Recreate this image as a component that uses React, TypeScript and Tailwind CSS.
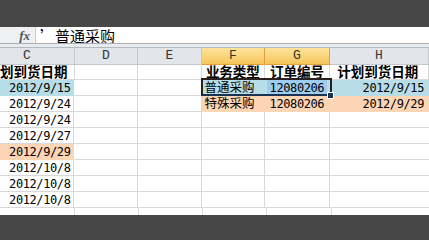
import React from "react";

const cjk = { fontFamily: '"Noto Sans CJK SC", "Noto Sans", sans-serif' };
const mono = { fontFamily: '"DejaVu Sans Mono", "Liberation Mono", monospace' };

type Row = {
  c: string;
  cBg?: string;
  f?: string;
  g?: string;
  h?: string;
  fill?: string;
};

const rows: Row[] = [
  { c: "2012/9/15", cBg: "bg-[#b7dee8] border-[#b7dee8]", f: "普通采购", g: "12080206", h: "2012/9/15", fill: "bg-[#b7dee8] border-[#b7dee8]" },
  { c: "2012/9/24", f: "特殊采购", g: "12080206", h: "2012/9/29", fill: "bg-[#fcd5b4] border-[#fcd5b4]" },
  { c: "2012/9/24" },
  { c: "2012/9/27" },
  { c: "2012/9/29", cBg: "bg-[#fcd5b4] border-[#fcd5b4]" },
  { c: "2012/10/8" },
  { c: "2012/10/8" },
  { c: "2012/10/8" },
];

const grid = "border-r border-b border-[#d9d9d9]";

const HeadCell = ({ label, w, sel, pl }: { label: string; w: string; sel?: boolean; pl?: string }) => (
  <div
    className={`${w} h-full flex items-center ${pl ? pl : "justify-center"} text-[13px] ${
      sel
        ? "bg-gradient-to-b from-[#fde49a] to-[#f6c55a] border-r border-b border-[#e2a13b]"
        : "bg-[#e2e5e9] border-r border-b border-[#c3c8ce]"
    } text-[#333]`}
    style={{ fontFamily: '"Liberation Mono", monospace' }}
  >
    {label}
  </div>
);

export default function App() {
  return (
    <div className="w-[429px] h-[240px] overflow-hidden bg-white flex flex-col relative">
      <div className="h-[27px] shrink-0 bg-[#474747]" />

      {/* formula bar */}
      <div className="h-[16px] shrink-0 flex">
        <div className="w-[36px] h-full bg-[#eef0f2] border-r border-[#c9cdd2] flex items-center justify-end pr-[5px]">
          <span className="text-[13px] italic font-bold text-[#555] leading-none" style={{ fontFamily: '"Liberation Serif", serif' }}>
            fx
          </span>
        </div>
        <div className="flex-1 flex items-center pl-[4px] text-[15px] leading-none text-black" style={cjk}>
          ’普通采购
        </div>
      </div>
      <div className="h-[1px] shrink-0 bg-[#a9afb7]" />
      <div className="h-[3px] shrink-0 bg-[#e9ecef]" />
      <div className="h-[1px] shrink-0 bg-[#b4b9c0]" />

      {/* column headers */}
      <div className="h-[17px] shrink-0 flex">
        <HeadCell label="C" w="w-[75px]" pl="pl-[23px]" />
        <HeadCell label="D" w="w-[64px]" />
        <HeadCell label="E" w="w-[64px]" />
        <HeadCell label="F" w="w-[64px]" sel />
        <HeadCell label="G" w="w-[65px]" sel />
        <HeadCell label="H" w="w-[100px]" />
      </div>

      {/* title row */}
      <div className="h-[15px] shrink-0 flex text-[13.5px] font-bold leading-none text-black" style={cjk}>
        <div className={`w-[75px] h-full flex items-center justify-end pr-[6px] overflow-hidden whitespace-nowrap ${grid}`}>
          计划到货日期
        </div>
        <div className={`w-[64px] h-full ${grid}`} />
        <div className={`w-[64px] h-full ${grid}`} />
        <div className={`w-[64px] h-full flex items-center justify-center whitespace-nowrap ${grid}`}>业务类型</div>
        <div className={`w-[65px] h-full flex items-center justify-center whitespace-nowrap ${grid}`}>订单编号</div>
        <div className={`w-[100px] h-full flex items-center justify-center whitespace-nowrap pr-[2px] ${grid}`}>计划到货日期</div>
      </div>

      {/* data rows */}
      {rows.map((r, i) => (
        <div key={i} className="h-[16px] shrink-0 flex text-[12px] leading-none text-black">
          <div
            className={`w-[75px] h-full flex items-center justify-end pr-[3px] pt-[1px] tracking-[-0.4px] border-r border-b ${r.cBg ?? "border-[#d9d9d9]"}`}
            style={mono}
          >
            {r.c}
          </div>
          <div className={`w-[64px] h-full ${grid}`} />
          <div className={`w-[64px] h-full ${grid}`} />
          <div
            className={`w-[64px] h-full flex items-center pl-[3px] text-[12.5px] whitespace-nowrap border-r border-b ${r.fill ?? "border-[#d9d9d9]"}`}
            style={cjk}
          >
            {r.f}
          </div>
          <div
            className={`w-[65px] h-full flex items-center justify-center pt-[1px] tracking-[-0.4px] border-r border-b ${r.fill ?? "border-[#d9d9d9]"}`}
            style={mono}
          >
            {i === 0 ? (
              <span className="w-[60px] h-[14px] -mt-[2px] bg-[#9fcdf1] flex items-center justify-center pt-[1px]">{r.g}</span>
            ) : (
              r.g
            )}
          </div>
          <div
            className={`w-[100px] h-full flex items-center justify-end pr-[5px] pt-[1px] tracking-[-0.4px] border-b ${r.fill ?? "border-[#d9d9d9]"}`}
            style={mono}
          >
            {r.h}
          </div>
        </div>
      ))}

      {/* partial row */}
      <div className="h-[7px] shrink-0 flex">
        <div className="w-[75px] h-full border-r border-[#d9d9d9]" />
        <div className="w-[64px] h-full border-r border-[#d9d9d9]" />
        <div className="w-[64px] h-full border-r border-[#d9d9d9]" />
        <div className="w-[64px] h-full border-r border-[#d9d9d9]" />
        <div className="w-[65px] h-full border-r border-[#d9d9d9]" />
      </div>

      <div className="flex-1 bg-[#474747]" />

      {/* selection box */}
      <div className="absolute left-[201px] top-[78px] w-[131px] h-[18px] border-2 border-[#2b201c] border-b-[#1a3352]" />
      <div className="absolute left-[327px] top-[92px] w-[7px] h-[7px] bg-[#1a3352] border border-white" />
    </div>
  );
}
